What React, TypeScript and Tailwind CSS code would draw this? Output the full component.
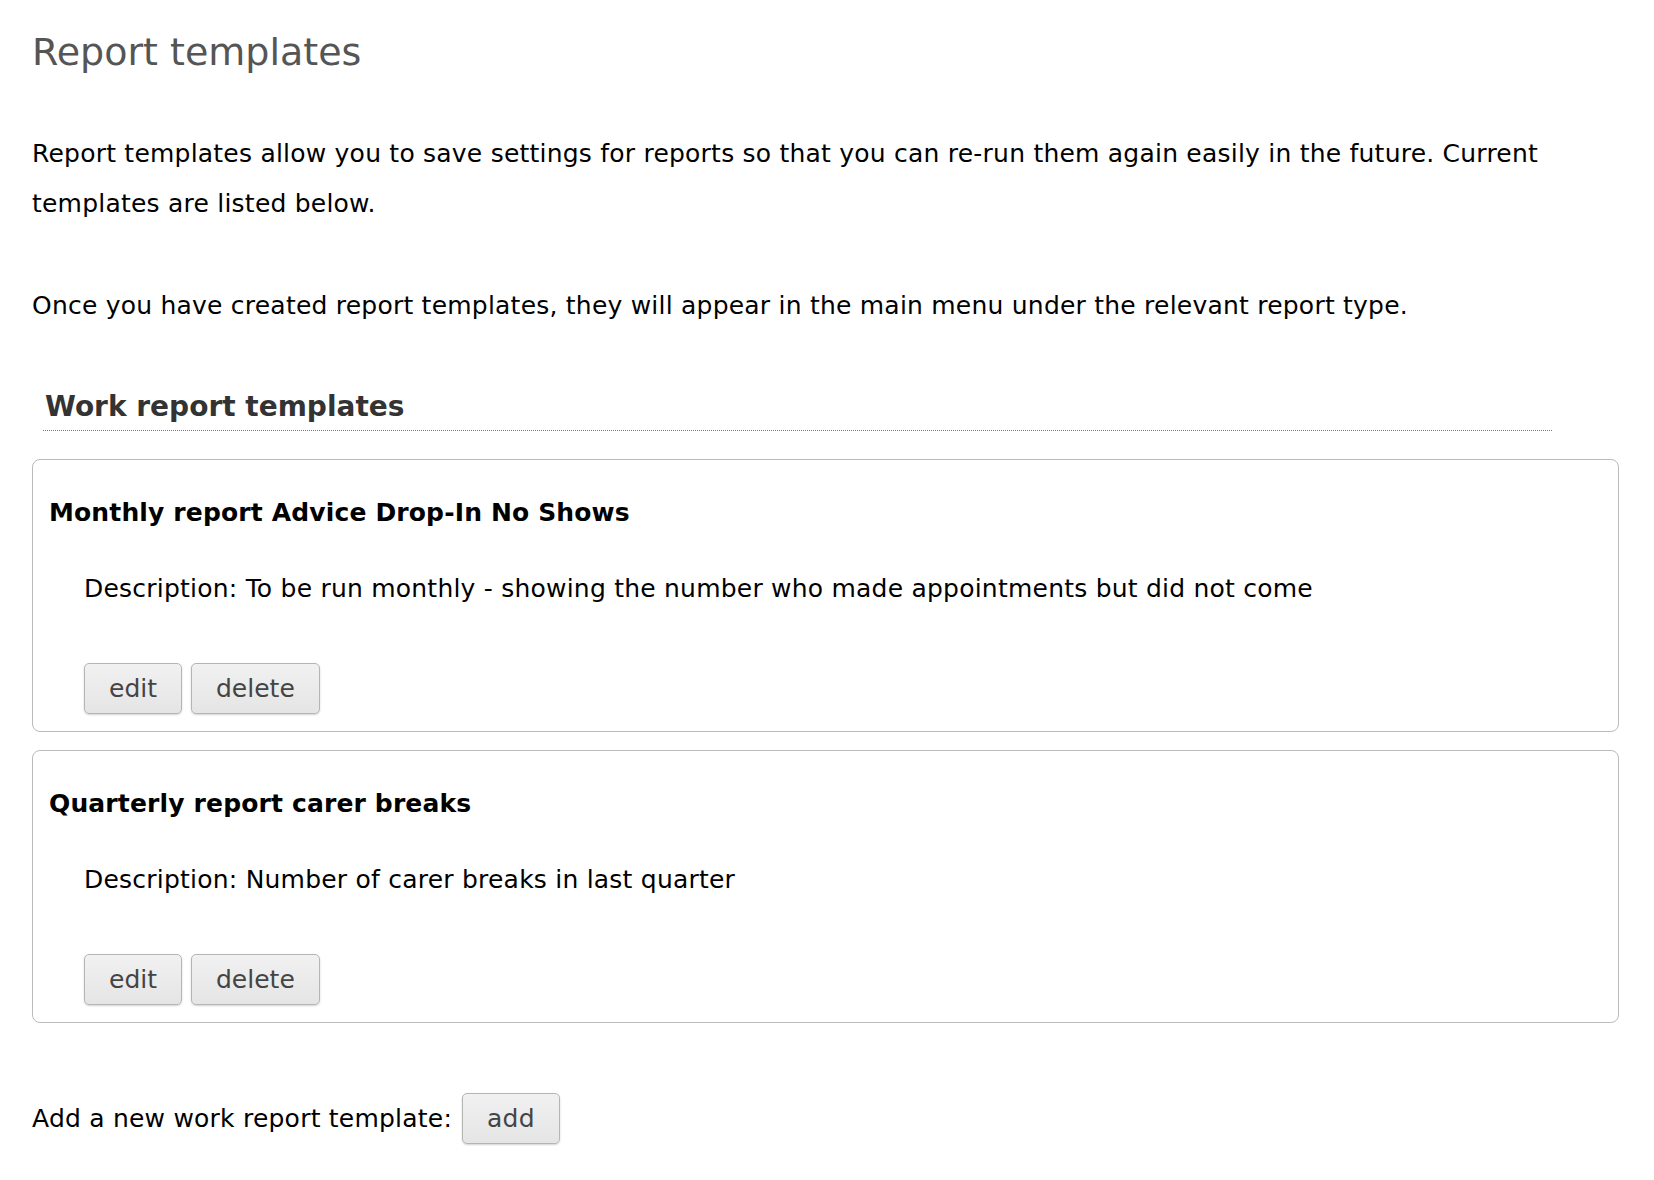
const TEMPLATES = [
  {
    name: "Monthly report Advice Drop-In No Shows",
    description: "To be run monthly - showing the number who made appointments but did not come",
  },
  {
    name: "Quarterly report carer breaks",
    description: "Number of carer breaks in last quarter",
  },
];

function GreyButton({ children }: { children: React.ReactNode }) {
  return (
    <button
      type="button"
      className="h-[51px] rounded-[5px] border border-[#b5b5b5] bg-gradient-to-b from-[#f1f1f1] to-[#e5e5e5] px-[24px] text-[25px] leading-[30px] text-[#444] shadow-[0_1px_2px_rgba(0,0,0,0.18)]"
    >
      {children}
    </button>
  );
}

export default function App() {
  return (
    <div className="min-h-screen bg-white pb-10 pl-[32px] pr-[35px] pt-[29px] font-['DejaVu_Sans',Verdana,sans-serif] text-black">
      <h1 className="text-[38px] leading-[46px] font-normal text-[#555]">Report templates</h1>

      <p className="mt-[54px] text-[25px] leading-[50px] tracking-[0.22px]">
        Report templates allow you to save settings for reports so that you can re-run them again easily in the
        future. Current templates are listed below.
      </p>
      <p className="mt-[52px] text-[25px] leading-[50px] tracking-[0.22px]">
        Once you have created report templates, they will appear in the main menu under the relevant report type.
      </p>

      <h2 className="mt-[58px] ml-[11px] mr-[67px] border-b border-dotted border-[#777] pb-[5px] pl-[2px] text-[28px] leading-[36px] font-bold text-[#333]">
        Work report templates
      </h2>

      <div className="mt-[28px] flex flex-col gap-[18px]">
        {TEMPLATES.map((t) => (
          <div key={t.name} className="rounded-[8px] border border-[#bbb] pb-[17px] pl-[16px] pt-[38px]">
            <h3 className="text-[25px] leading-[30px] font-bold tracking-[0.15px]">{t.name}</h3>
            <div className="ml-[35px]">
              <p className="mt-[36px] text-[25px] leading-[50px] tracking-[0.22px]">Description: {t.description}</p>
              <div className="mt-[49px] flex gap-[9px]">
                <GreyButton>edit</GreyButton>
                <GreyButton>delete</GreyButton>
              </div>
            </div>
          </div>
        ))}
      </div>

      <div className="mt-[70px] flex items-center gap-[10px] text-[25px] tracking-[0.22px]">
        <span>Add a new work report template:</span>
        <GreyButton>add</GreyButton>
      </div>
    </div>
  );
}
